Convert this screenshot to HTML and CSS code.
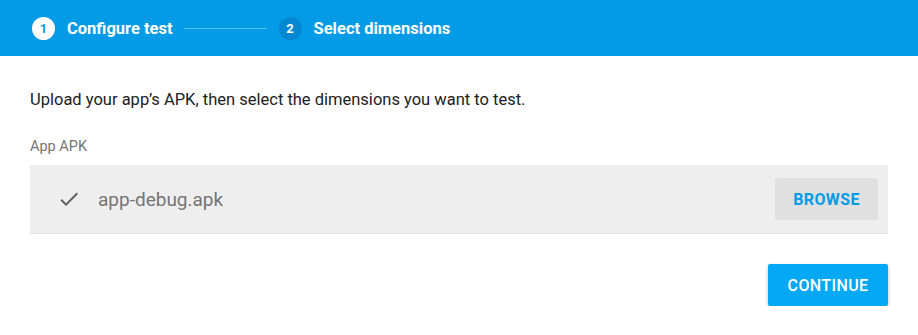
FILE: index.html
```html
<!DOCTYPE html>
<html>
<head>
<meta charset="utf-8">
<link rel="stylesheet" href="styles.css">
</head>
<body>
<header class="stepper">
  <div class="step active">
    <span class="num">1</span>
    <span class="label">Configure test</span>
  </div>
  <div class="connector"></div>
  <div class="step">
    <span class="num">2</span>
    <span class="label">Select dimensions</span>
  </div>
</header>
<main class="content">
  <p class="intro">Upload your app’s APK, then select the dimensions you want to test.</p>
  <div class="field-label">App APK</div>
  <div class="upload">
    <svg class="check" viewBox="0 0 24 24" width="24" height="24"><path d="M9 16.17L4.83 12l-1.42 1.41L9 19 21 7l-1.41-1.41z" fill="#616161"/></svg>
    <span class="filename">app-debug.apk</span>
    <button class="browse">BROWSE</button>
  </div>
  <div class="actions">
    <button class="continue">CONTINUE</button>
  </div>
</main>
</body>
</html>
```
FILE: styles.css
```css
html, body {
  margin: 0;
  padding: 0;
  background: #ffffff;
  font-family: Roboto, "Liberation Sans", sans-serif;
}
.stepper {
  height: 56px;
  background: #039be5;
  display: flex;
  align-items: center;
  padding-left: 32px;
  box-sizing: border-box;
}
.step {
  display: flex;
  align-items: center;
  gap: 12px;
}
.num {
  width: 23px;
  height: 23px;
  border-radius: 50%;
  background: #0288d1;
  color: #ffffff;
  font-size: 13px;
  font-weight: 700;
  display: flex;
  align-items: center;
  justify-content: center;
}
.step.active .num {
  background: #ffffff;
  color: #039be5;
}
.label {
  color: #ffffff;
  font-size: 16.5px;
  font-weight: 700;
}
.connector {
  width: 83px;
  height: 1px;
  background: #4fc3f7;
  margin: 0 12px 0 11px;
}
.content {
  padding: 0 30px;
}
.intro {
  margin: 0;
  padding-top: 33px;
  font-size: 16.5px;
  line-height: 22px;
  color: #212121;
}
.field-label {
  margin-top: 27px;
  font-size: 14.5px;
  line-height: 18px;
  color: #757575;
}
.upload {
  margin-top: 9px;
  height: 69px;
  background: #eeeeee;
  border-bottom: 1px solid #e4e4e4;
  box-sizing: border-box;
  display: flex;
  align-items: center;
  padding: 0 10px 0 27px;
}
.check {
  flex: none;
}
.filename {
  margin-left: 17px;
  font-size: 19px;
  color: #757575;
  flex: 1;
}
.browse {
  width: 103px;
  height: 42px;
  border: none;
  border-radius: 2px;
  background: #e0e0e0;
  color: #039be5;
  font-family: Roboto, "Liberation Sans", sans-serif;
  font-size: 16px;
  font-weight: 700;
  letter-spacing: 0.4px;
}
.actions {
  display: flex;
  justify-content: flex-end;
  margin-top: 30px;
}
.continue {
  width: 120px;
  height: 42px;
  border: none;
  border-radius: 2px;
  background: #03a9f4;
  color: #ffffff;
  font-family: Roboto, "Liberation Sans", sans-serif;
  font-size: 16px;
  font-weight: 500;
  letter-spacing: 0.4px;
  box-shadow: 0 2px 4px rgba(0,0,0,0.25);
}
```
